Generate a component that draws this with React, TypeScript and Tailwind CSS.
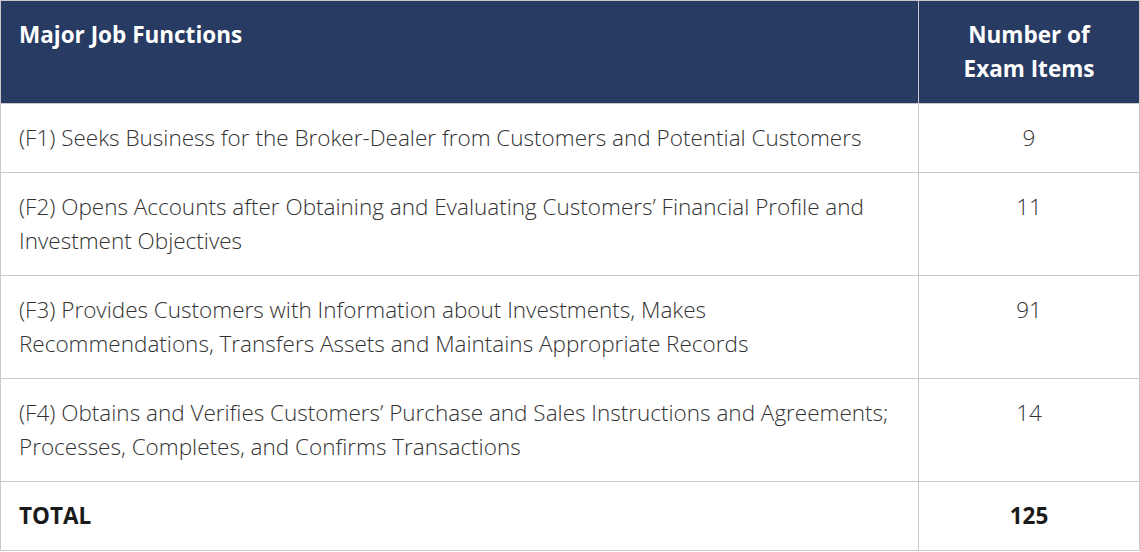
const ROWS = [
  {
    label: '(F1) Seeks Business for the Broker-Dealer from Customers and Potential Customers',
    count: '9',
  },
  {
    label:
      '(F2) Opens Accounts after Obtaining and Evaluating Customers’ Financial Profile and Investment Objectives',
    count: '11',
  },
  {
    label:
      '(F3) Provides Customers with Information about Investments, Makes Recommendations, Transfers Assets and Maintains Appropriate Records',
    count: '91',
  },
  {
    label:
      '(F4) Obtains and Verifies Customers’ Purchase and Sales Instructions and Agreements; Processes, Completes, and Confirms Transactions',
    count: '14',
  },
];

export default function App() {
  return (
    <div className="w-[1140px] bg-white" style={{ fontFamily: '"Open Sans", sans-serif' }}>
      <table className="w-full border-collapse text-[22.5px] font-light leading-[34px] text-[#333333]">
        <thead>
          <tr className="bg-[#283b63] text-white">
            <th className="border border-[#c9c9c9] py-[17px] pl-[18px] pr-4 text-left align-top font-bold">
              Major Job Functions
            </th>
            <th className="w-[221px] border border-[#c9c9c9] py-[17px] px-4 text-center align-top font-bold">
              Number of
              <br />
              Exam Items
            </th>
          </tr>
        </thead>
        <tbody>
          {ROWS.map((row) => (
            <tr key={row.count}>
              <td className="border border-[#c9c9c9] py-[17px] pl-[18px] pr-4 align-top">{row.label}</td>
              <td className="border border-[#c9c9c9] py-[17px] px-4 text-center align-top">{row.count}</td>
            </tr>
          ))}
          <tr className="font-bold text-[#1a1a1a]">
            <td className="border border-[#c9c9c9] py-[17px] pl-[18px] pr-4 align-top">TOTAL</td>
            <td className="border border-[#c9c9c9] py-[17px] px-4 text-center align-top">125</td>
          </tr>
        </tbody>
      </table>
    </div>
  );
}
